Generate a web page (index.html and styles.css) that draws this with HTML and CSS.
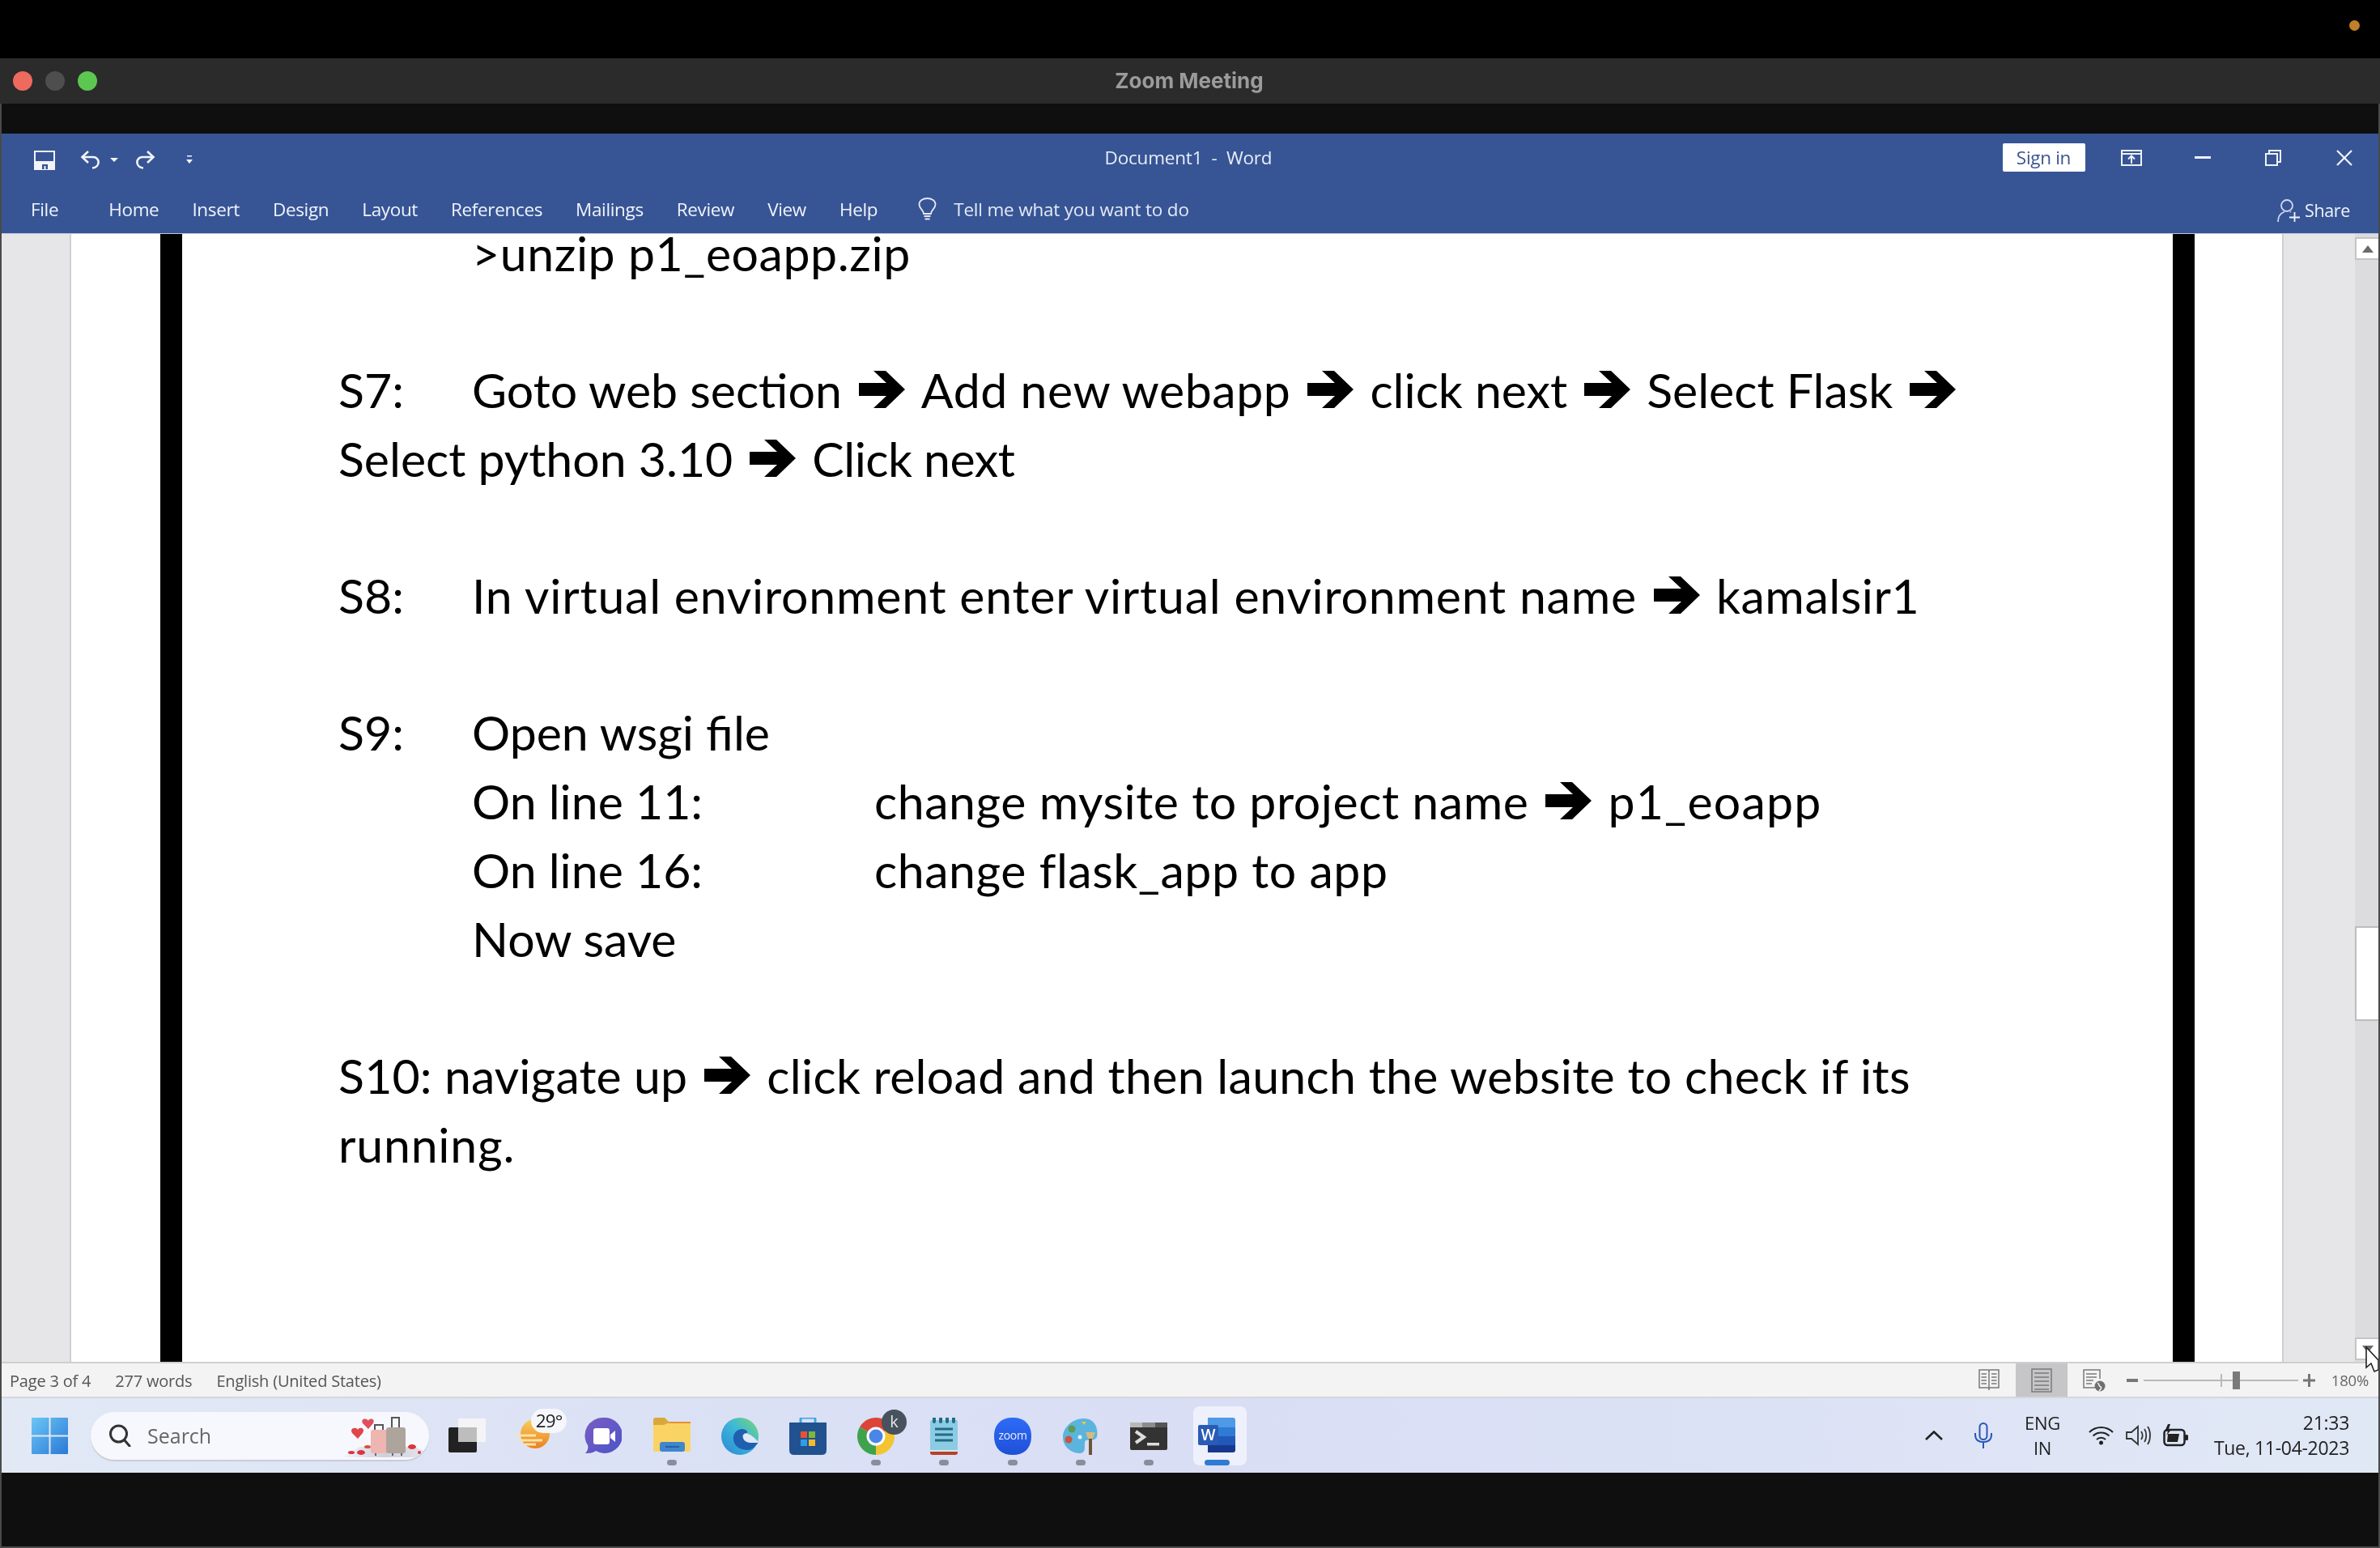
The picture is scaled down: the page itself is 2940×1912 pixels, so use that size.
FILE: index.html
```html
<!DOCTYPE html>
<html lang="en">
<head>
<meta charset="utf-8">
<title>Zoom Meeting</title>
<link rel="stylesheet" href="styles.css">
</head>
<body>
<svg class="defs" width="0" height="0" aria-hidden="true">
  <defs>
    <symbol id="arrow" viewBox="0 0 57 46"><path d="M0 15H34L18 0H33L57 23L33 46H18L34 31H0Z"/></symbol>
    <linearGradient id="winblue" x1="0" y1="0" x2="1" y2="1"><stop offset="0" stop-color="#6cc6f5"/><stop offset="1" stop-color="#2a78d6"/></linearGradient>
    <linearGradient id="edgeg" x1="0" y1="1" x2="1" y2="0"><stop offset="0" stop-color="#2a86d4"/><stop offset=".55" stop-color="#3db8d8"/><stop offset="1" stop-color="#7ad96e"/></linearGradient>
    <linearGradient id="meetg" x1="0" y1="0" x2="1" y2="1"><stop offset="0" stop-color="#7b5cc4"/><stop offset="1" stop-color="#4a55c8"/></linearGradient>
    <linearGradient id="sung" x1="0" y1="0" x2="0" y2="1"><stop offset="0" stop-color="#f8cf5c"/><stop offset="1" stop-color="#ee7f22"/></linearGradient>
    <linearGradient id="zoomg" x1="0" y1="0" x2="0" y2="1"><stop offset="0" stop-color="#2d6cf6"/><stop offset="1" stop-color="#1f4fd8"/></linearGradient>
    <linearGradient id="floorg" x1="0" y1="0" x2="1" y2="0"><stop offset="0" stop-color="#f5f6fb"/><stop offset=".5" stop-color="#cfcfdc"/><stop offset="1" stop-color="#e6e6f0"/></linearGradient>
  </defs>
</svg>
<div class="screen">
  <header class="menubar"><span class="rec-dot"></span></header>
  <div class="zoombar">
    <div class="lights"><span class="light light-red"></span><span class="light light-grey"></span><span class="light light-green"></span></div>
    <div class="zoom-title">Zoom Meeting</div>
    <div></div>
  </div>
  <main class="meeting">
    <div class="word">
      <div class="titlerow">
        <div class="qat">
          <svg class="qi qi-save" width="26" height="24" viewBox="0 0 26 24"><path d="M1 1H25V23H1Z" fill="none" stroke="#f2f4fa" stroke-width="2"/><path d="M1 13H25V23H1Z" fill="#f2f4fa"/><path d="M10 23V17H17V23H14.500V19H12.500V23Z" fill="#375595"/></svg>
          <svg class="qi qi-undo" width="27" height="23" viewBox="0 0 27 23" fill="none" stroke="#f2f4fa" stroke-width="2.6"><path d="M10 1L2.500 8L10 15"/><path d="M3 8H16C25 8 25 21 15 21.500"/></svg>
          <svg class="qi qi-drop" width="10" height="5" viewBox="0 0 10 5" fill="#f2f4fa"><path d="M0 0H10L5 5Z"/></svg>
          <svg class="qi qi-redo" width="27" height="23" viewBox="0 0 27 23" fill="none" stroke="#f2f4fa" stroke-width="2.600"><path d="M17 1L24.500 8L17 15"/><path d="M24 8H11C2 8 2 21 12 21.500"/></svg>
          <svg class="qi qi-cust" width="8" height="11" viewBox="0 0 8 11" fill="#f2f4fa"><path d="M1 0H7V1.500H1Z"/><path d="M0 5H8L4 10Z"/></svg>
        </div>
        <div class="doc-title">Document1&nbsp; - &nbsp;Word</div>
        <div class="winctl">
          <button class="signin">Sign in</button>
          <span class="ctl"><svg width="26" height="20" viewBox="0 0 26 20" fill="none" stroke="#eef1f8" stroke-width="2"><path d="M1 1H25V19H1Z"/><path d="M1 5H25"/><path d="M13 17V8M9 11.500L13 7.500L17 11.500"/></svg></span>
          <span class="ctl"><svg width="20" height="3" viewBox="0 0 20 3"><path d="M0 0H20V3H0Z" fill="#eef1f8"/></svg></span>
          <span class="ctl"><svg width="20" height="20" viewBox="0 0 20 20" fill="none" stroke="#eef1f8" stroke-width="2"><path d="M5 5V1H19V15H15"/><path d="M1 5H15V19H1Z"/></svg></span>
          <span class="ctl"><svg width="20" height="20" viewBox="0 0 20 20" fill="none" stroke="#f2f4fa" stroke-width="2.200"><path d="M1 1L19 19M19 1L1 19"/></svg></span>
        </div>
      </div>
      <nav class="tabs">
        <span class="tab tab-file">File</span>
        <span class="tab">Home</span>
        <span class="tab">Insert</span>
        <span class="tab">Design</span>
        <span class="tab">Layout</span>
        <span class="tab">References</span>
        <span class="tab">Mailings</span>
        <span class="tab">Review</span>
        <span class="tab">View</span>
        <span class="tab">Help</span>
        <svg class="bulb" width="23" height="28" viewBox="0 0 23 28" fill="none" stroke="#e4e9f4" stroke-width="1.800"><path d="M7 20C7 15 1.500 14 1.500 8.500C1.500 4 6 1 11.500 1S21.500 4 21.500 8.500C21.500 14 16 15 16 20Z"/><path d="M7.500 23H15.500M8.500 26.500H14.500"/></svg>
        <span class="tellme">Tell me what you want to do</span>
        <span class="share">
          <svg width="28" height="28" viewBox="0 0 28 28" fill="none" stroke="#cfdaf0" stroke-width="1.800"><circle cx="12" cy="8" r="7"/><path d="M1 28C1 21 5 17 9 15.500M16 15.500L17 16"/><path d="M15 22.500H28M21.500 16V28" stroke="#f2f4fa"/></svg>
          Share
        </span>
      </nav>
      <section class="docarea">
        <div class="gutter gutter-left"></div>
        <div class="page">
          <div class="sheet">
            <div class="text">
              <div class="row row-first"><span></span><span class="s5">&gt;unzip p1_eoapp.zip</span></div>
              <div class="blank-first"></div>
              <div class="row"><span>S7:</span><span>Goto web section<svg class="arr"><use href="#arrow"/></svg><span class="s5">Add new webapp</span><svg class="arr"><use href="#arrow"/></svg>click next<svg class="arr"><use href="#arrow"/></svg>Select Flask<svg class="arr arr-end"><use href="#arrow"/></svg></span></div>
              <div class="line">Select python 3.10<svg class="arr"><use href="#arrow"/></svg><span class="sn">Click next</span></div>
              <div class="blank"></div>
              <div class="row"><span>S8:</span><span><span class="s8">In virtual environment enter virtual environment name</span><svg class="arr"><use href="#arrow"/></svg><span class="s5">kamalsir1</span></span></div>
              <div class="blank"></div>
              <div class="row"><span>S9:</span><span>Open wsgi file</span></div>
              <div class="subrow"><span>On line 11:</span><span><span class="s5">change mysite to project name</span><svg class="arr"><use href="#arrow"/></svg><span class="s12">p1_eoapp</span></span></div>
              <div class="subrow"><span>On line 16:</span><span class="s5">change flask_app to app</span></div>
              <div class="row"><span></span><span>Now save</span></div>
              <div class="blank"></div>
              <div class="line"><span class="s1">S10: navigate up</span><svg class="arr"><use href="#arrow"/></svg><span class="s3">click reload and then launch the website to check if its</span></div>
              <div class="line s8">running.</div>
            </div>
          </div>
        </div>
        <div class="gutter gutter-right"></div>
        <div class="scrollbar">
          <div class="sb-btn"><svg width="14" height="9" viewBox="0 0 14 9"><path d="M0 9L7 0L14 9Z" fill="#6b6b6b"/></svg></div>
          <div class="sb-upper"></div>
          <div class="sb-thumb"></div>
          <div class="sb-lower"></div>
          <div class="sb-btn"><svg width="14" height="9" viewBox="0 0 14 9"><path d="M0 0H14L7 9Z" fill="#6b6b6b"/></svg></div>
        </div>
        <svg class="cursor" width="16" height="34" viewBox="0 0 16 34"><path d="M1 1V26L7 21L11 31L16 29V17L1 1Z" fill="#fff" stroke="#222" stroke-width="1.600"/></svg>
      </section>
      <footer class="status">
        <div class="status-left">
          <span>Page 3 of 4</span><span>277 words</span><span>English (United States)</span>
        </div>
        <div class="status-right">
          <svg class="st-read" width="26" height="27" viewBox="0 0 26 27" fill="none" stroke="#7a7a7a" stroke-width="1.500"><path d="M1 1H12L13 2L14 1H25V23H14L13 24L12 23H1Z"/><path d="M13 2V26M3.500 6H10M3.500 10H10M3.500 14H10M3.500 18H10M16 6H22.500M16 10H22.500M16 14H22.500M16 18H22.500"/></svg>
          <span class="st-print"><svg width="26" height="30" viewBox="0 0 26 30" fill="none" stroke="#7a7a7a" stroke-width="1.500"><path d="M1 1H25V29H1Z"/><path d="M4 6H22M4 11H22M4 16H22M4 21H22M4 26H22"/></svg></span>
          <svg class="st-web" width="28" height="28" viewBox="0 0 28 28" fill="none" stroke="#7a7a7a" stroke-width="1.500"><path d="M15 23H1V1H21V12"/><path d="M4 6H17M4 10H17M4 14H13M4 18H11"/><circle cx="21" cy="21" r="6.500" fill="#6f6f6f" stroke="none"/><path d="M18 17C21 19 19 21 22 22C24 23 21 26 20 27" stroke="#f3f3f3"/></svg>
          <svg class="st-minus" width="14" height="4" viewBox="0 0 14 4"><path d="M0 0H14V4H0Z" fill="#777"/></svg>
          <div class="slider"><span class="slider-tick"></span><span class="slider-thumb"></span></div>
          <svg class="st-plus" width="15" height="16" viewBox="0 0 15 16"><path d="M6 0H9V6.500H15V9.500H9V16H6V9.500H0V6.500H6Z" fill="#777"/></svg>
          <span class="st-zoom">180%</span>
        </div>
      </footer>
      <footer class="taskbar">
        <svg class="start" width="45" height="45" viewBox="0 0 45 45"><path d="M1 0H21.500V21.500H0V1Q0 0 1 0ZM23.500 0H44Q45 0 45 1V21.500H23.500ZM0 23.500H21.500V45H1Q0 45 0 44ZM23.500 23.500H45V44Q45 45 44 45H23.500Z" fill="url(#winblue)"/></svg>
        <div class="search">
          <svg class="search-ic" width="28" height="28" viewBox="0 0 28 28" fill="none" stroke="#333" stroke-width="3"><circle cx="12.500" cy="12" r="10"/><path d="M19.500 19.500L26 27" stroke-linecap="round"/></svg>
          <span class="search-text">Search</span>
          <svg class="search-art" width="106" height="50" viewBox="0 0 106 50">
            <path d="M0 50L22 37H90L106 44L100 50Z" fill="url(#floorg)"/>
            <path d="M13 20C9 13 19 12 20 16C21 12 30 13 26 20L20 27Z" fill="#e0454a"/>
            <path d="M26 8C23 2 31 1 33 5C34 1 42 2 39 8L33 15Z" fill="#e0505c"/>
            <path d="M41 17V10H51V17M62 14V1H71V14" fill="none" stroke="#555" stroke-width="2"/>
            <rect x="36" y="16" width="21" height="29" rx="3" fill="#efb5b0"/>
            <rect x="55" y="13" width="24" height="32" rx="3" fill="#ada59c"/>
            <path d="M42 45V48M74 45V48M63 45V48" stroke="#666" stroke-width="2"/>
            <ellipse cx="24" cy="44" rx="5" ry="3" fill="#d9363e"/><ellipse cx="12" cy="44" rx="4" ry="2" fill="#d9363e"/><ellipse cx="32" cy="37" rx="4" ry="2" fill="#d9503e"/><ellipse cx="87" cy="37" rx="5" ry="3" fill="#d9363e"/><ellipse cx="96" cy="44" rx="2" ry="2" fill="#d9363e"/>
          </svg>
        </div>
        <div class="apps">
          <div class="app"><svg class="ic" width="46" height="46" viewBox="0 0 46 46"><rect x="0" y="12" width="35" height="31" rx="2" fill="#222"/><rect x="12" y="1" width="34" height="29" fill="#f4f4f6"/><rect x="12" y="12" width="23" height="18" fill="#bdbdbd"/></svg><span class="ind ind-none"></span></div>
          <div class="app"><svg class="ic" width="46" height="46" viewBox="0 0 46 46"><circle cx="23" cy="20" r="18" fill="url(#sung)"/><path d="M0 22H24M4 28H32M10 33H24" stroke="#fbe3a4" stroke-width="3"/></svg><span class="bubble">29°</span><span class="ind ind-none"></span></div>
          <div class="app"><svg class="ic" width="46" height="46" viewBox="0 0 46 46"><path d="M23 0A22 22 0 1 1 14 41C10 44 5 44 1 44C4 41 5 37 4 34A22 22 0 0 1 23 0Z" fill="url(#meetg)"/><rect x="11" y="13" width="20" height="20" rx="3" fill="#fff"/><path d="M32 21L38 16V30L32 25Z" fill="#fff"/></svg><span class="ind ind-none"></span></div>
          <div class="app"><svg class="ic" width="46" height="46" viewBox="0 0 46 46"><path d="M0 3Q0 0 3 0H14L20 6H46V42H0Z" fill="#d8a93a"/><path d="M0 6H46V42H0Z" fill="#f9d465"/><path d="M20 5H46V7H18Z" fill="#e78f36"/><path d="M0 2H13L20 6L13 9H0Z" fill="#d8a93a"/><rect x="8" y="30" width="31" height="12" rx="3" fill="#3f86cc"/><rect x="15" y="35" width="17" height="2" fill="#225fa6"/></svg><span class="ind"></span></div>
          <div class="app"><svg class="ic" width="46" height="46" viewBox="0 0 46 46"><circle cx="23" cy="23" r="23" fill="url(#edgeg)"/><path d="M46 30C36 28 30 30 29 27C28 23 33 20 32 17C28 11 16 14 15 24C14 34 22 40 33 40C38 40 42 36 46 30Z" fill="#1f5fb0"/><path d="M27 25C25 21 30 18 33 20C38 22 43 26 46 31L38 31C32 31 28 29 27 25Z" fill="#e2e7f7"/></svg><span class="ind ind-none"></span></div>
          <div class="app"><svg class="ic" width="46" height="46" viewBox="0 0 46 46"><path d="M14 6V2Q14 0 16 0H30Q32 0 32 2V6" fill="none" stroke="#3ea6e0" stroke-width="3"/><path d="M0 6H46V40Q46 46 40 46H6Q0 46 0 40Z" fill="#22518f"/><rect x="14" y="17" width="8" height="8" fill="#e8532f"/><rect x="24" y="17" width="8" height="8" fill="#7cb83a"/><rect x="14" y="27" width="8" height="8" fill="#2f9ee8"/><rect x="24" y="27" width="8" height="8" fill="#f6bb2a"/></svg><span class="ind ind-none"></span></div>
          <div class="app"><svg class="ic" width="46" height="46" viewBox="0 0 46 46"><path d="M23 23L3.100 11.500A23 23 0 0 1 42.900 11.500Z" fill="#db4437"/><path d="M23 23L42.900 11.500A23 23 0 0 1 23 46Z" fill="#f4c430"/><path d="M23 23L23 46A23 23 0 0 1 3.100 11.500Z" fill="#3fa34d"/><circle cx="23" cy="23" r="11.500" fill="#fff"/><circle cx="23" cy="23" r="8.500" fill="#4a85e8"/></svg><span class="badge-k">k</span><span class="ind"></span></div>
          <div class="app"><svg class="ic" width="34" height="46" viewBox="0 0 34 46"><rect x="0" y="3" width="34" height="38" rx="2" fill="#8ccbe3"/><path d="M0 40H34V43Q34 46 31 46H3Q0 46 0 43Z" fill="#b8402a"/><rect x="0" y="40" width="34" height="2" fill="#d8e8e8"/><path d="M5 5V1M13 5V1M21 5V1M29 5V1" stroke="#1f6d85" stroke-width="4" stroke-linecap="round"/><path d="M6 14H28M6 21H28M6 28H28" stroke="#1f6d85" stroke-width="3"/></svg><span class="ind"></span></div>
          <div class="app"><svg class="ic" width="46" height="46" viewBox="0 0 46 46"><path d="M23 0C37 0 46 8 46 23C46 38 37 46 23 46C9 46 0 38 0 23C0 8 9 0 23 0Z" fill="url(#zoomg)"/><text class="zoom-logo" x="23" y="27" text-anchor="middle">zoom</text></svg><span class="ind"></span></div>
          <div class="app"><svg class="ic" width="44" height="46" viewBox="0 0 44 46"><path d="M26 1C40 1 44 14 42 24C38 30 32 26 28 28C25 34 30 42 22 44C10 44 0 36 0 24C0 12 12 1 26 1Z" fill="#5bb4de"/><circle cx="11" cy="14" r="4.500" fill="#5d9b52"/><circle cx="7" cy="27" r="4.500" fill="#c8553c"/><circle cx="21" cy="24" r="2.500" fill="#e6f2fa"/><path d="M23 5H29L26 9Z" fill="#e6c74e"/><path d="M28 18H40L37 26H31Z" fill="#d7b982"/><path d="M34 26V46" stroke="#6b5536" stroke-width="4"/></svg><span class="ind"></span></div>
          <div class="app"><svg class="ic" width="46" height="46" viewBox="0 0 46 46"><rect x="0" y="6" width="46" height="34" rx="2" fill="#333"/><rect x="15" y="6" width="16" height="6" fill="#8c8c8c"/><rect x="0" y="6" width="15" height="6" fill="#b8b8b8"/><rect x="31" y="6" width="15" height="6" fill="#555"/><path d="M7 17L17 24L7 31" fill="none" stroke="#ddd" stroke-width="4"/><rect x="21" y="31" width="15" height="3.500" fill="#ddd"/></svg><span class="ind"></span></div>
          <div class="app app-active"><svg class="ic" width="46" height="46" viewBox="0 0 46 46"><path d="M12 0H43Q46 0 46 3V12H12Z" fill="#4f9ae6"/><rect x="12" y="12" width="34" height="11" fill="#2e7ad4"/><rect x="12" y="23" width="34" height="11" fill="#2059b8"/><path d="M12 34H46V40Q46 43 43 43H12Z" fill="#16398f"/><rect x="0" y="9" width="25" height="25" rx="2" fill="#2a5bb5"/><text class="word-logo" x="12.500" y="28" text-anchor="middle">W</text></svg><span class="ind ind-active"></span></div>
        </div>
        <div class="tray">
          <svg class="tr-chev" width="22" height="12" viewBox="0 0 22 12" fill="none" stroke="#222" stroke-width="2.600"><path d="M1 11L11 1.500L21 11"/></svg>
          <svg class="tr-mic" width="22" height="32" viewBox="0 0 22 32" fill="none" stroke="#2a56b8" stroke-width="2"><rect x="6.500" y="1" width="9" height="20" rx="4.500"/><path d="M1 13V15C1 21 5 24 11 24C17 24 21 21 21 15V13M11 24V32"/></svg>
          <div class="tr-lang"><span>ENG</span><span>IN</span></div>
          <svg class="tr-wifi" width="31" height="24" viewBox="0 0 31 24" fill="none" stroke="#222" stroke-width="2"><path d="M1 8C9 0 22 0 30 8M5.500 12.500C11 7 20 7 25.500 12.500M10 17C13 14 18 14 21 17"/><circle cx="15.500" cy="21" r="2.500" fill="#222" stroke="none"/></svg>
          <svg class="tr-spk" width="31" height="28" viewBox="0 0 31 28" fill="none" stroke="#333" stroke-width="1.800"><path d="M1 10H7L15 3V25L7 18H1Z"/><path d="M19 9C21 12 21 16 19 19M23 6C26 10 26 18 23 22M27 3C31 9 31 19 27 25"/></svg>
          <svg class="tr-bat" width="31" height="28" viewBox="0 0 31 28"><rect x="1.500" y="7" width="25" height="19" rx="4" fill="none" stroke="#222" stroke-width="2.500"/><path d="M6 12H20L18 22H5Z" fill="#222"/><rect x="27" y="13" width="4" height="7" rx="1.500" fill="#222"/><path d="M6 0L2 9H6L4 14L11 6H7L9 0Z" fill="#222"/></svg>
          <div class="tr-clock"><span>21:33</span><span>Tue, 11-04-2023</span></div>
        </div>
      </footer>
    </div>
  </main>
</div>
</body>
</html>
```
FILE: styles.css
```css
* { box-sizing: border-box; }
html, body { margin: 0; padding: 0; background: #000; }
body { width: 2940px; height: 1912px; overflow: hidden; font-family: "Open Sans", "Liberation Sans", sans-serif; }
.defs { position: absolute; }
svg { display: block; flex: none; }
.screen { width: 2940px; height: 1912px; display: flex; flex-direction: column; filter: blur(.5px); }

.menubar { height: 72px; background: #000; display: flex; justify-content: flex-end; align-items: flex-start; padding: 25px 25px 0 0; }
.rec-dot { width: 13px; height: 13px; border-radius: 50%; background: #c17f2b; }

.zoombar { height: 56px; background: #2b2b2b; display: grid; grid-template-columns: 1fr auto 1fr; align-items: center; }
.lights { display: flex; gap: 16px; padding-left: 16px; }
.light { width: 24px; height: 24px; border-radius: 50%; }
.light-red { background: #ee6a5e; }
.light-grey { background: #4e4e4e; }
.light-green { background: #5cc651; }
.zoom-title { font-family: Inter, "Liberation Sans", sans-serif; font-weight: 700; font-size: 26px; color: #9b9b9b; padding-bottom: 2px; margin-left: -2px; }

.meeting { flex: 1; background: #0f0f0f; border-left: 2px solid #4a4a4a; border-right: 2px solid #4a4a4a; border-bottom: 2px solid #4a4a4a; padding: 37px 0 91px; display: flex; min-height: 0; }
.word { flex: 1; display: flex; flex-direction: column; min-width: 0; }

.titlerow { height: 63px; background: #375595; display: grid; grid-template-columns: 1fr auto 1fr; align-items: center; color: #eef1f8; padding-bottom: 4px; }
.qat { display: flex; align-items: center; padding-left: 40px; padding-top: 6px; }
.qi-undo { margin-left: 31px; }
.qi-drop { margin-left: 10px; }
.qi-redo { margin-left: 19px; }
.qi-cust { margin-left: 38px; }
.doc-title { font-size: 22.500px; letter-spacing: -.2px; color: #e8edf7; padding-right: 4px; }
.winctl { display: flex; align-items: center; justify-content: flex-end; margin-right: -1.500px; }
.signin { width: 102px; height: 35px; border: 0; border-radius: 2px; background: #fff; color: #3a5590; font: 22.500px "Open Sans", sans-serif; letter-spacing: -.3px; padding: 0; margin-right: 14px; }
.ctl { width: 87.500px; display: flex; justify-content: center; }

.tabs { height: 61px; background: #375595; display: flex; align-items: center; padding-left: 36px; color: #f0f3fa; font-size: 22.500px; letter-spacing: -.35px; border-bottom: 1px solid #b9cbe2; }
.tab { margin-right: 41px; white-space: nowrap; }
.tab-file { margin-right: 62px; }
.bulb { margin-left: 9px; }
.tellme { margin-left: 21px; color: #e4e9f4; letter-spacing: -.2px; }
.share { margin-left: auto; padding: 3px 35px 0 0; display: flex; align-items: center; gap: 6px; font-size: 21.500px; }

.docarea { flex: 1; min-height: 0; display: flex; position: relative; border-bottom: 2px solid #cfcfcf; background: #fff; }
.gutter { background: #e6e6e8; }
.gutter-left { width: 86px; border-right: 2px solid #cfcfd1; flex: none; }
.gutter-right { width: 90px; border-left: 2px solid #cfcfd1; flex: none; }
.page { flex: 1; min-width: 0; padding: 0 108px 0 110px; background: #fff; }
.sheet { height: 100%; border-left: 27px solid #000; border-right: 27px solid #000; padding-left: 193px; }
.text { font-family: Lato, "Liberation Sans", sans-serif; font-size: 59px; line-height: 84.700px; color: #000; white-space: nowrap; }
.row-first { line-height: 47px; }
.blank-first { height: 104px; }
.blank { height: 84.700px; }
.row { display: grid; grid-template-columns: 165px auto; }
.subrow { display: grid; grid-template-columns: 165px 497px auto; }
.subrow > span:first-child { grid-column: 2; }
.subrow > span:last-child { grid-column: 3; }
.sn { letter-spacing: -.5px; }
.s1 { letter-spacing: .12px; }
.s3 { letter-spacing: .3px; }
.s5 { letter-spacing: .55px; }
.s8 { letter-spacing: .78px; }
.s12 { letter-spacing: 1.200px; }
.arr { display: inline-block; width: 57px; height: 46px; fill: #000; margin: 0 20px 0 21px; vertical-align: baseline; }
.arr-end { margin-right: 0; }

.scrollbar { width: 29px; flex: none; background: #dcdbde; display: flex; flex-direction: column; padding: 4px 0 2px; }
.sb-btn { height: 28px; flex: none; background: #fff; border: 2px solid #c4c4c4; border-right: 0; display: flex; align-items: center; justify-content: center; }
.sb-upper { height: 823px; flex: none; }
.sb-thumb { height: 117px; flex: none; background: #fff; border: 2px solid #bdbdbd; border-right: 0; }
.sb-lower { flex: 1; }
.cursor { position: absolute; right: 0; bottom: -15px; }

.status { height: 43px; flex: none; background: #f3f3f3; border-bottom: 2px solid #d4d6da; display: flex; justify-content: space-between; align-items: stretch; color: #555; font-size: 20px; letter-spacing: -.2px; }
.status-left { display: flex; align-items: center; gap: 30px; padding: 2px 0 0 10px; }
.status-right { display: flex; align-items: center; padding-right: 12px; }
.st-print { width: 64px; align-self: stretch; background: #c6c6c8; display: flex; align-items: center; justify-content: center; margin: 0 19px 0 20px; }
.st-minus { margin-left: 26px; }
.slider { position: relative; width: 191px; height: 2px; background: #b9b9b9; margin: 0 6px 0 7px; }
.slider-tick { position: absolute; left: 95px; top: -7px; width: 2px; height: 16px; background: #b9b9b9; }
.slider-thumb { position: absolute; left: 110px; top: -10px; width: 9px; height: 22px; background: #7a7a7a; }
.st-zoom { margin-left: 20px; color: #666; font-size: 18.500px; }

.taskbar { height: 92px; flex: none; background: linear-gradient(90deg, #e2e9f5 0%, #dbe1f5 30%, #d9def5 50%, #dbe1f5 70%, #e1e8f5 100%); display: flex; align-items: center; color: #222; }
.start { margin-left: 37px; }
.search { width: 418px; height: 59px; margin-left: 28px; border-radius: 30px; background: #f7f8fd; box-shadow: 0 2px 1px #c9ccd6; display: flex; align-items: center; padding-left: 22px; position: relative; overflow: hidden; }
.search-text { margin-left: 20px; font-size: 25px; color: #666; }
.search-art { position: absolute; right: 2px; top: 6px; }
.apps { display: flex; margin-left: 5px; align-self: stretch; }
.app { width: 84.200px; display: flex; flex-direction: column; align-items: center; padding-top: 24px; position: relative; }
.ic { height: 46px; position: relative; }
.ind { width: 12px; height: 7px; border-radius: 4px; background: #8a8d9c; margin-top: 6px; position: relative; }
.ind-none { visibility: hidden; }
.ind-active { width: 31px; background: #2f7bd3; }
.app-active::before { content: ""; position: absolute; left: 13px; top: 10px; width: 66px; height: 73px; border-radius: 8px; background: #eef0fb; }
.bubble { position: absolute; left: 37px; top: 13px; width: 44px; height: 30px; border-radius: 16px; background: #f6f7fb; color: #222; font-size: 22.500px; line-height: 30px; text-align: center; letter-spacing: -.8px; }
.badge-k { position: absolute; left: 49px; top: 14px; width: 31px; height: 31px; border-radius: 50%; background: #48525c; color: #e3e6ea; font-size: 20px; line-height: 29px; text-align: center; }
.zoom-logo { font-family: "Open Sans", sans-serif; font-size: 14px; fill: #e8eefc; letter-spacing: -.3px; }
.word-logo { font-family: "Open Sans", sans-serif; font-weight: 600; font-size: 19px; fill: #fff; }

.tray { margin-left: auto; display: flex; align-items: center; padding-right: 36px; }
.tr-mic { margin-left: 39px; }
.tr-lang { width: 60px; margin-left: 32px; display: flex; flex-direction: column; align-items: center; font-size: 22px; line-height: 31px; color: #222; letter-spacing: -.3px; }
.tr-wifi { margin-left: 27px; }
.tr-spk { margin-left: 15px; }
.tr-bat { margin-left: 15px; }
.tr-clock { width: 200px; margin-left: -1px; display: flex; flex-direction: column; align-items: flex-end; font-size: 23px; line-height: 31px; color: #222; letter-spacing: -.3px; }
```
